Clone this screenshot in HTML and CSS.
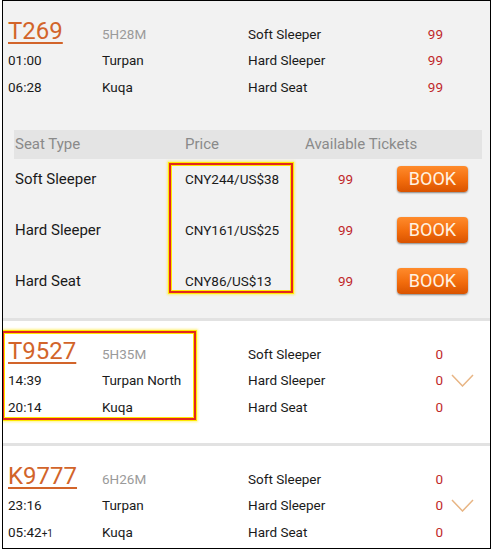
FILE: index.html
```html
<!DOCTYPE html>
<html>
<head>
<meta charset="utf-8">
<link rel="stylesheet" href="styles.css">
</head>
<body>
<div class="frame">
  <section class="train expanded">
    <div class="summary">
      <a class="num">T269</a><span class="dur">5H28M</span><span class="seat">Soft Sleeper</span><span class="cnt">99</span>
      <span class="time">01:00</span><span class="stn">Turpan</span><span class="seat">Hard Sleeper</span><span class="cnt">99</span>
      <span class="time">06:28</span><span class="stn">Kuqa</span><span class="seat">Hard Seat</span><span class="cnt">99</span>
    </div>
    <div class="fares">
      <div class="fares-head"><span class="h1">Seat Type</span><span>Price</span><span>Available Tickets</span></div>
      <div class="fares-body">
        <div class="fare-row"><span class="ftype">Soft Sleeper</span><span class="price">CNY244/US$38</span><span class="fcnt">99</span><button class="book">BOOK</button></div>
        <div class="fare-row"><span class="ftype">Hard Sleeper</span><span class="price">CNY161/US$25</span><span class="fcnt">99</span><button class="book">BOOK</button></div>
        <div class="fare-row"><span class="ftype">Hard Seat</span><span class="price">CNY86/US$13</span><span class="fcnt">99</span><button class="book">BOOK</button></div>
        <div class="mark mark-price"></div>
      </div>
    </div>
  </section>
  <section class="train">
    <div class="summary">
      <a class="num">T9527</a><span class="dur">5H35M</span><span class="seat">Soft Sleeper</span><span class="cnt">0</span>
      <span class="time">14:39</span><span class="stn">Turpan North</span><span class="seat">Hard Sleeper</span><span class="cnt">0</span>
      <span class="time">20:14</span><span class="stn">Kuqa</span><span class="seat">Hard Seat</span><span class="cnt">0</span>
      <svg class="chev" width="23" height="13" viewBox="0 0 23 13"><polyline points="1,1 11.5,12 22,1"/></svg>
    </div>
    <div class="mark mark-train"></div>
  </section>
  <section class="train last">
    <div class="summary">
      <a class="num">K9777</a><span class="dur">6H26M</span><span class="seat">Soft Sleeper</span><span class="cnt">0</span>
      <span class="time">23:16</span><span class="stn">Turpan</span><span class="seat">Hard Sleeper</span><span class="cnt">0</span>
      <span class="time">05:42<small class="plus">+1</small></span><span class="stn">Kuqa</span><span class="seat">Hard Seat</span><span class="cnt">0</span>
      <svg class="chev" width="23" height="13" viewBox="0 0 23 13"><polyline points="1,1 11.5,12 22,1"/></svg>
    </div>
  </section>
</div>
</body>
</html>
```

FILE: styles.css
```css
html, body {
  margin: 0;
  padding: 0;
  background: #fff;
}
body {
  font-family: Roboto, "Liberation Sans", sans-serif;
  color: #1a1a1a;
}
.frame {
  box-sizing: border-box;
  margin-left: 2px;
  width: 489px;
  height: 549px;
  border: 1px solid #000;
  overflow: hidden;
  background: #fff;
}
.train {
  position: relative;
  padding: 14px 0 22px 5px;
  border-bottom: 3px solid #e2e2e2;
  background: #fff;
}
.train.expanded {
  background: #f2f2f2;
  padding-bottom: 17px;
}
.train.last {
  border-bottom: none;
  padding-bottom: 2px;
}
.summary {
  display: grid;
  grid-template-columns: 94px 146px 150px 45px 31px;
  grid-template-rows: 32px 27px 27px;
  align-items: baseline;
  font-size: 13.5px;
  line-height: 27px;
}
.num {
  grid-column: 1;
  font-size: 24px;
  line-height: 32px;
  color: #d2642a;
  text-decoration: underline;
  text-decoration-thickness: 1.5px;
  text-underline-offset: 3px;
}
.time { grid-column: 1; }
.dur { color: #9a9a9a; }
.cnt {
  grid-column: 4;
  text-align: right;
  color: #c0282a;
}
.plus { font-size: 10px; }
.chev {
  grid-column: 5;
  grid-row: 2;
  align-self: center;
  margin-left: 8px;
  fill: none;
  stroke: #e8b584;
  stroke-width: 1.5;
}
.fares {
  margin: 29px 8px 0 6px;
}
.fares-head {
  display: grid;
  grid-template-columns: 171px 120px auto;
  height: 29px;
  line-height: 29px;
  background: #e4e4e4;
  color: #8a8a8a;
  font-size: 15px;
}
.h1 { padding-left: 1px; }
.fares-body {
  position: relative;
  display: flex;
  flex-direction: column;
  gap: 11px;
}
.fare-row {
  display: grid;
  grid-template-columns: 171px 153px 59px 71px;
  height: 40px;
  align-items: center;
}
.ftype {
  padding-left: 1px;
  font-size: 15px;
}
.price { font-size: 13.5px; }
.fcnt {
  font-size: 13.5px;
  color: #c0282a;
}
.book {
  width: 71px;
  height: 26px;
  padding: 0;
  border: none;
  border-radius: 4px;
  background: linear-gradient(#ff8b2c, #f26c0c 55%, #d95300);
  box-shadow: 0 1px 2px rgba(0, 0, 0, 0.45);
  color: #fff2e2;
  font-family: Roboto, "Liberation Sans", sans-serif;
  font-size: 18px;
  line-height: 26px;
}
.mark {
  position: absolute;
  box-sizing: border-box;
  border: 2px solid #e3261c;
  box-shadow: 0 0 0 1px #ffe800, 0 0 2px 2px rgba(255, 230, 0, 0.45), inset 0 0 0 1px #ffe800;
}
.mark-price {
  top: 4px;
  left: 155px;
  width: 124px;
  height: 130px;
}
.mark-train {
  top: 10px;
  left: -1px;
  width: 194px;
  height: 89px;
}
```
